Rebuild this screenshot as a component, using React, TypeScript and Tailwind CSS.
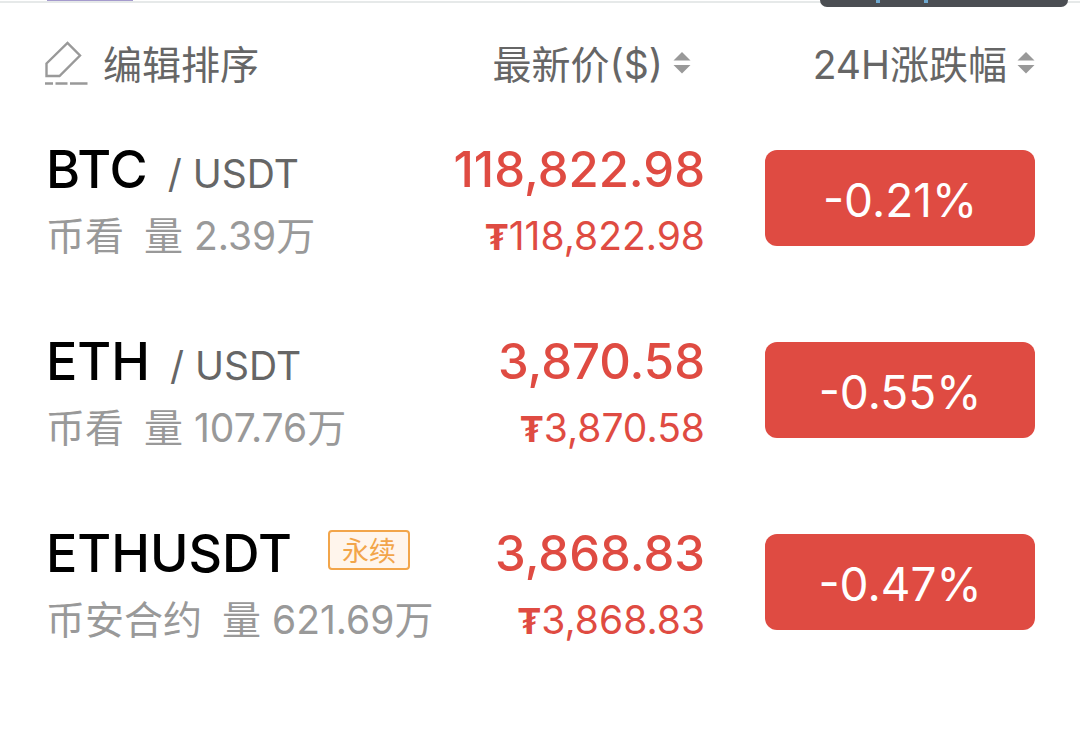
type Pair = {
  base: string;
  quote?: string;
  tag?: string;
  exchange: string;
  volume: string;
  price: string;
  change: string;
};

const PAIRS: Pair[] = [
  { base: 'BTC', quote: 'USDT', exchange: '币看', volume: '2.39万', price: '118,822.98', change: '-0.21%' },
  { base: 'ETH', quote: 'USDT', exchange: '币看', volume: '107.76万', price: '3,870.58', change: '-0.55%' },
  { base: 'ETHUSDT', tag: '永续', exchange: '币安合约', volume: '621.69万', price: '3,868.83', change: '-0.47%' },
];

function EditIcon() {
  return (
    <svg width="44" height="46" viewBox="0 0 44 46" fill="none" stroke="#999999" strokeWidth="2.4" aria-hidden="true">
      <path d="M1.5 23.5 22.5 3 35 15.5 14.5 36H1.5Z" />
      <path d="M0 43.500H8M10.500 43.500H22.500M25 43.500H42.500" />
    </svg>
  );
}

function SortIcon() {
  return (
    <svg width="18" height="22" viewBox="0 0 18 22" fill="#999999" aria-hidden="true">
      <path d="M9 0 17.500 8.500H.5Z" />
      <path d="M.5 13H17.500L9 21.500Z" />
    </svg>
  );
}

function TopEdge() {
  return (
    <div className="relative h-[3px]">
      <div className="absolute inset-x-0 top-px h-[2px] bg-[#e6e9e9]" />
      <div className="absolute left-[47px] top-0 h-px w-[86px] bg-[#a59bcd]" />
      <div className="absolute right-3 top-0 h-[7px] w-[248px] rounded-b-xl bg-[#4b4e53]">
        <span className="absolute left-[56px] top-0 h-[3px] w-1 bg-[#6fa9d0]" />
        <span className="absolute left-[104px] top-0 h-[3px] w-1 bg-[#6fa9d0]" />
      </div>
    </div>
  );
}

function PairRow({ pair }: { pair: Pair }) {
  return (
    <tr className="h-48 align-top whitespace-nowrap">
      <td className="pl-px">
        <div className="flex h-16 items-baseline">
          <span className="text-[52px] leading-16 font-medium text-black">{pair.base}</span>
          {pair.quote && <span className="ml-5 text-[39px] leading-16 text-[#666666]">/ {pair.quote}</span>}
          {pair.tag && (
            <span className="mb-2 ml-9 self-center rounded-sm border-2 border-[#f2a54a] bg-[#fff5ec] px-3 pt-1 text-[27px] leading-8 text-[#f2a54a]">
              {pair.tag}
            </span>
          )}
        </div>
        <div className="flex h-16 items-center pt-1 text-[39px] text-[#999999]">
          <span>{pair.exchange}</span>
          <span className="ml-5">量 {pair.volume}</span>
        </div>
      </td>
      <td className="text-right text-[#df4b42]">
        <div className="h-16 text-[49px] leading-16 font-medium">{pair.price}</div>
        <div className="h-16 pt-0.5 text-[39px] leading-16">
          <span className="text-4xl leading-16 font-bold">₮</span>
          {pair.price}
        </div>
      </td>
      <td>
        <div className="mt-3 ml-auto flex h-24 w-[270px] items-center justify-center rounded-xl bg-[#df4b42] pt-1 text-[46px] text-white">
          {pair.change}
        </div>
      </td>
    </tr>
  );
}

export default function App() {
  return (
    <main className="min-h-screen bg-white font-['Inter','Noto_Sans_CJK_SC',sans-serif]">
      <TopEdge />
      <table className="mx-auto w-[calc(100%-90px)] table-fixed">
        <colgroup>
          <col className="w-2/5" />
          <col />
          <col className="w-1/3" />
        </colgroup>
        <thead>
          <tr className="h-[135px] align-top whitespace-nowrap text-[39px] text-[#666666]">
            <th className="pt-7 font-normal">
              <button type="button" className="flex h-16 items-center gap-3.5">
                <EditIcon />
                <span className="pt-1">编辑排序</span>
              </button>
            </th>
            <th className="pt-7 font-normal">
              <button type="button" className="mr-3.5 ml-auto flex h-16 items-center gap-2.5">
                <span className="pt-1">最新价($)</span>
                <SortIcon />
              </button>
            </th>
            <th className="pt-7 font-normal">
              <button type="button" className="ml-auto flex h-16 items-center gap-2.5">
                <span className="pt-1">24H涨跌幅</span>
                <SortIcon />
              </button>
            </th>
          </tr>
        </thead>
        <tbody>
          {PAIRS.map((pair) => (
            <PairRow key={pair.base} pair={pair} />
          ))}
        </tbody>
      </table>
    </main>
  );
}
